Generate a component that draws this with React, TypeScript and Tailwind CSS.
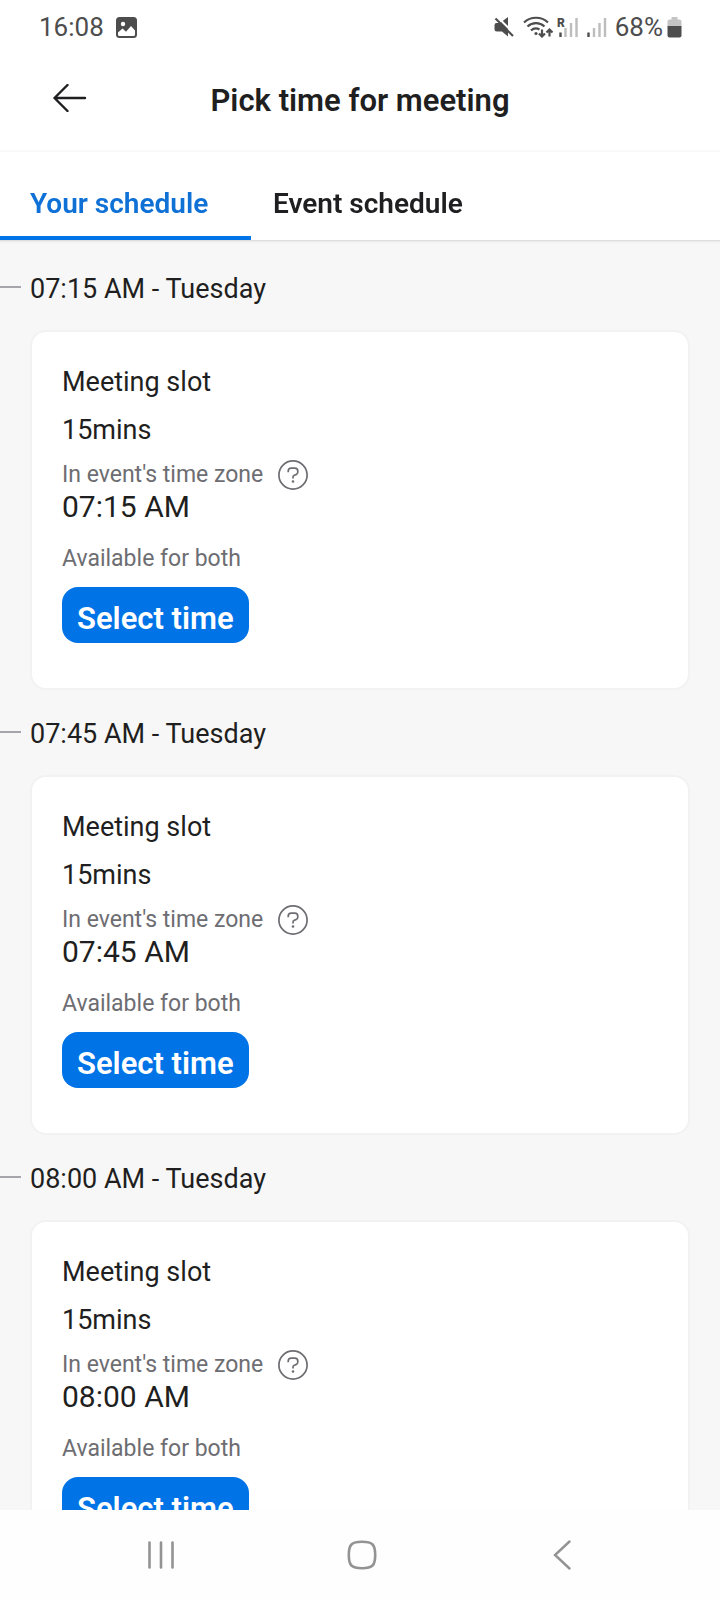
import React, { useState } from 'react';

interface Slot {
  id: number;
  time: string;
  day: string;
  duration: string;
}

const slots: Slot[] = [
  { id: 1, time: '07:15 AM', day: 'Tuesday', duration: '15mins' },
  { id: 2, time: '07:45 AM', day: 'Tuesday', duration: '15mins' },
  { id: 3, time: '08:00 AM', day: 'Tuesday', duration: '15mins' },
];

const tabs = [
  { id: 'yours', label: 'Your schedule', className: 'w-[251px] pl-[30px]' },
  { id: 'event', label: 'Event schedule', className: 'px-[22px]' },
];

const StatusBar = () => (
  <div className="flex h-[54px] shrink-0 items-center justify-between pl-[39px] pr-[38px] text-[26px] leading-[30px] text-[#4d4d4d]">
    <div className="flex items-center gap-3">
      <span>16:08</span>
      <svg width="21" height="21" viewBox="0 0 21 21">
        <rect width="21" height="21" rx="3.5" fill="#4d4d4d" />
        <circle cx="7" cy="7" r="2.2" fill="#fff" />
        <path d="M2 15.5l4.5-4 3.5 3.2 5-5.7 4 4.5v4q0 1.500-1.500 1.500h-14q-1.500 0-1.500-1.500z" fill="#fff" />
      </svg>
    </div>
    <div className="flex items-center gap-2">
      {/* Sound off */}
      <svg width="21" height="21" viewBox="0 0 21 21">
        <path d="M2 6h4l8-6v19.500l-6-5h-5q-2.500 0-2.500-2.500v-3.500q0-2.500 1.500-2.500z" fill="#4d4d4d" />
        <path d="M3.500 0l17.500 17.500" stroke="#fff" strokeWidth="2" />
        <path d="M1.500 1.500l17.500 17.500" stroke="#4d4d4d" strokeWidth="2.200" />
      </svg>
      <div className="flex gap-px">
        {/* Wifi */}
        <svg width="31" height="22" viewBox="0 0 31 22" fill="none" stroke="#4d4d4d" strokeWidth="2.200">
          <path d="M1 6.500a17.500 17.500 0 0 1 24 0M4.500 10.500a12.500 12.500 0 0 1 17 0M8 14.500a7.500 7.500 0 0 1 8.500-1" />
          <circle cx="13" cy="17.500" r="1.600" fill="#4d4d4d" stroke="none" />
          <path d="M19 13.500v7M16 17.500l3 3 3-3M26.500 20.500v-7M23.500 16.500l3-3 3 3" />
        </svg>
        {/* Mobile signal, two sims */}
        <svg width="52" height="22" viewBox="-2 0 52 22">
          <path d="M3.500 16.500v4.500M31.500 16.500v4.500" stroke="#4d4d4d" strokeWidth="2.400" />
          <path d="M8.500 12v9M14 7v14M19.500 2v19M37 12v9M42.500 7v14M48 2v19" stroke="#bdbdbd" strokeWidth="2.400" />
          <text x="0" y="11" fontSize="12" fontWeight="900" fill="#4d4d4d" fontFamily="Roboto, sans-serif">R</text>
        </svg>
      </div>
      <div className="flex items-center gap-1">
        <span>68%</span>
        <svg width="15" height="21" viewBox="0 0 15 21">
          <path d="M4.500 0h6v2.500h2q2 0 2 2v5h-14v-5q0-2 2-2h2z" fill="#c4c4c4" />
          <path d="M0.500 9h14v9.500q0 2-2 2h-10q-2 0-2-2z" fill="#4d4d4d" />
        </svg>
      </div>
    </div>
  </div>
);

const SlotCard = ({ slot }: { slot: Slot }) => (
  <section className="pt-[23px]">
    <div className="flex items-start gap-[9px]">
      <span className="mt-[18px] h-[2px] w-[21px] bg-[#a5a5ab]" />
      <h2 className="pt-px text-[27px] leading-[40px]">
        {slot.time} - {slot.day}
      </h2>
    </div>

    <div className="mx-[30px] mt-[21px] rounded-[16px] border-2 border-[#f2f2f2] bg-white px-[30px] pb-[45px] pt-[26px]">
      <p className="text-[27px] leading-[48px]">Meeting slot</p>
      <p className="text-[27px] leading-[48px]">{slot.duration}</p>
      <div className="mt-[5px] flex items-center gap-[15px] text-[23px] leading-[32px] text-[#6d6d72]">
        <span>In event's time zone</span>
        <button type="button" aria-label="About time zones" className="cursor-pointer">
          <svg width="30" height="30" viewBox="0 0 30 30" fill="none" stroke="#6d6d72" strokeWidth="1.700">
            <circle cx="15" cy="15" r="14.100" />
            <path d="M10.200 12.200v-1q0-3 3-3h3.600q3 0 3 3v.8q0 2-1.800 2.600l-1.700.6q-1.300.5-1.300 1.800v1.500" />
            <circle cx="15" cy="21.500" r="1.300" fill="#6d6d72" stroke="none" />
          </svg>
        </button>
      </div>
      <p className="text-[30px] leading-[32px]">{slot.time}</p>
      <p className="mt-5 text-[23px] leading-[32px] text-[#6d6d72]">Available for both</p>
      <button
        type="button"
        className="mt-3 block h-[56px] cursor-pointer rounded-[16px] bg-[#0073e6] px-[15px] pt-2 text-[31px] font-semibold leading-[48px] text-white"
      >
        Select time
      </button>
    </div>
  </section>
);

const App = () => {
  const [activeTab, setActiveTab] = useState('yours');

  return (
    <div className="flex h-screen flex-col bg-white font-[Roboto,sans-serif] text-[#1f1f21]">
      <StatusBar />

      {/* Header */}
      <header className="grid h-[98px] shrink-0 grid-cols-[1fr_auto_1fr] items-center border-b-2 border-[#fafafa] pb-2">
        <button type="button" aria-label="Back" className="ml-[53px] w-[34px] cursor-pointer">
          <svg width="34" height="28" viewBox="0 0 34 28" fill="none" stroke="#1f1f21" strokeWidth="2.400" strokeLinecap="round" strokeLinejoin="round">
            <path d="M32 14H1.500M14.500 1L1.500 14l13 13" />
          </svg>
        </button>
        <h1 className="pt-1.5 text-[31px] font-semibold leading-[40px]">Pick time for meeting</h1>
      </header>

      {/* Tabs */}
      <nav className="z-10 flex h-[89px] shrink-0 border-b border-[#dddddd] shadow-[0_1px_2px_rgba(0,0,0,0.06)]">
        {tabs.map((tab) => (
          <button
            key={tab.id}
            type="button"
            onClick={() => setActiveTab(tab.id)}
            className={`cursor-pointer border-b-4 pt-5 text-left text-[28px] font-semibold leading-[34px] ${tab.className} ${
              activeTab === tab.id ? 'border-[#0073e6] text-[#0f70d6]' : 'border-transparent'
            }`}
          >
            {tab.label}
          </button>
        ))}
      </nav>

      {/* Slot list */}
      <main className="min-h-0 flex-1 overflow-y-auto bg-[#f7f7f7] pt-1 [scrollbar-width:none]">
        {slots.map((slot) => (
          <SlotCard key={slot.id} slot={slot} />
        ))}
      </main>

      {/* System navigation */}
      <footer className="grid h-[90px] shrink-0 grid-cols-[1fr_86px_1fr] items-center bg-[#fefefe] pb-px pl-[3px]">
        <button type="button" aria-label="Recent apps" className="justify-self-center">
          <svg width="28" height="30" viewBox="0 0 28 30" stroke="#939393" strokeWidth="2.600" strokeLinecap="round">
            <path d="M2.500 2.500v25M14 2.500v25M25.500 2.500v25" />
          </svg>
        </button>
        <button type="button" aria-label="Home" className="justify-self-center">
          <svg width="30" height="30" viewBox="0 0 30 30" fill="none" stroke="#939393" strokeWidth="2.600">
            <path d="M15 1.800c10.500 0 13.200 2.700 13.200 13.200S25.500 28.200 15 28.200 1.800 25.500 1.800 15 4.500 1.800 15 1.800z" />
          </svg>
        </button>
        <button type="button" aria-label="Go back" className="justify-self-center">
          <svg width="18" height="30" viewBox="0 0 18 30" fill="none" stroke="#939393" strokeWidth="2.400" strokeLinecap="round">
            <path d="M16.500 1.500L2 15l14.500 13.500" />
          </svg>
        </button>
      </footer>
    </div>
  );
};

export default App;
